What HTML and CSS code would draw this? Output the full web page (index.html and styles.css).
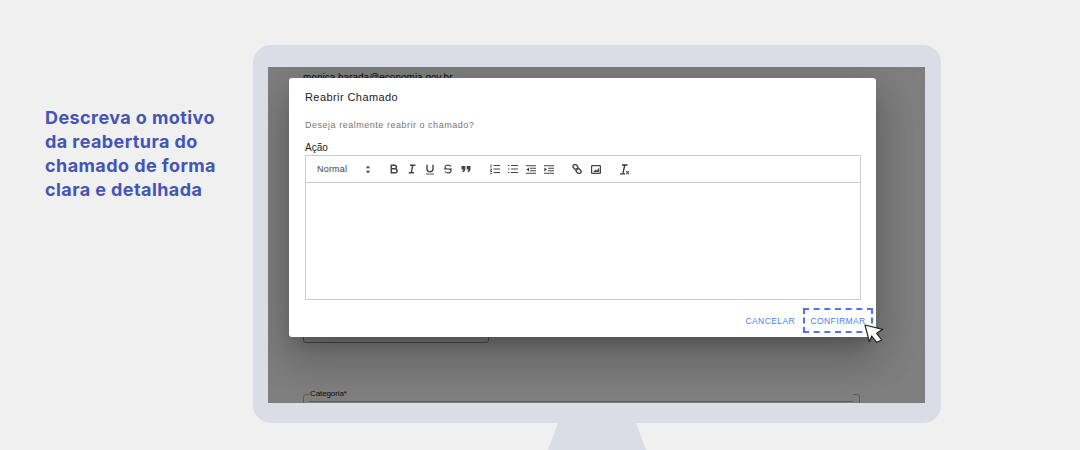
FILE: index.html
```html
<!DOCTYPE html>
<html lang="pt-BR">
<head>
<meta charset="utf-8">
<title>Reabrir Chamado</title>
<link rel="stylesheet" href="styles.css">
</head>
<body>
<main class="page">
  <h1 class="caption">Descreva o motivo<br>da reabertura do<br>chamado de forma<br>clara e detalhada</h1>
  <div class="computer">
    <div class="monitor">
      <div class="screen">
        <div class="bg-email">monica.harada@economia.gov.br</div>
        <div class="bg-box"></div>
        <div class="bg-field"><span class="bg-legend">Categoria*</span></div>
        <div class="scrim"></div>
        <section class="dialog">
          <h2 class="dialog-title">Reabrir Chamado</h2>
          <p class="dialog-text">Deseja realmente reabrir o chamado?</p>
          <label class="field-label">Ação</label>
          <div class="editor">
            <div class="toolbar">
              <span class="picker">Normal
                <svg class="tb-icon picker-arrows" width="6" height="9" viewBox="0 0 6 9"><path d="M3 0.5 5.2 3.2H.8ZM3 8.5.8 5.8H5.2Z" fill="#555"/></svg>
              </span>
              <div class="tb-group">
                <svg class="tb-icon" width="10" height="10" viewBox="0 0 10 10"><path d="M2.3 1.2H5.6C8 1.2 8 4.8 5.6 4.8H2.3ZM2.3 4.8H6.2C8.8 4.8 8.8 8.8 6.2 8.8H2.3Z" fill="none" stroke="#444" stroke-width="1.5"/></svg>
                <svg class="tb-icon" width="10" height="10" viewBox="0 0 10 10"><path d="M3 1.2H8.4M1.8 8.8H7M5.7 1.2 4.3 8.8" fill="none" stroke="#444" stroke-width="1.4"/></svg>
                <svg class="tb-icon" width="10" height="11" viewBox="0 0 10 11"><path d="M2 .8V5.2C2 8.4 8 8.4 8 5.2V.8" fill="none" stroke="#444" stroke-width="1.4"/><path d="M1 10H9" stroke="#5f7fae" stroke-width="1.3"/></svg>
                <svg class="tb-icon" width="10" height="10" viewBox="0 0 10 10"><path d="M8 2.6C7 .6 3 .6 2.2 2.6 1.6 4.2 3 5 5 5S8.6 6 7.9 7.4C7 9.400 3 9.400 2 7.400M.8 5H9.200" fill="none" stroke="#444" stroke-width="1.200"/></svg>
                <svg class="tb-icon" width="10" height="8" viewBox="0 0 10 8"><path d="M.5 1H4.300V4.200C4.300 6 3 7 1.500 7.300V5.700C2 5.500 2.400 5.200 2.400 4.600H.5ZM5.700 1H9.500V4.200C9.500 6 8.200 7 6.700 7.300V5.700C7.200 5.500 7.600 5.200 7.600 4.600H5.700Z" fill="#444"/></svg>
              </div>
              <div class="tb-group tb-lists">
                <svg class="tb-icon" width="10" height="10" viewBox="0 0 10 10"><path d="M3.500 1.500H10M3.500 5H10M3.500 8.500H10M1 .5V3.500M.3 5H1.800L.3 7.500H2M.3 9.500H1.800" fill="none" stroke="#444" stroke-width="1"/></svg>
                <svg class="tb-icon" width="10" height="10" viewBox="0 0 10 10"><path d="M3 1.500H10M3 5H10M3 8.500H10M0 1.500H1.500M0 5H1.500M0 8.500H1.500" fill="none" stroke="#444" stroke-width="1.100"/></svg>
                <svg class="tb-icon" width="10" height="9" viewBox="0 0 10 9"><path d="M0 .7H10M4 3.300H10M4 5.700H10M0 8.300H10" fill="none" stroke="#444" stroke-width="1.100"/><path d="M3 2.400V6.600L.3 4.500Z" fill="#444"/></svg>
                <svg class="tb-icon" width="10" height="9" viewBox="0 0 10 9"><path d="M0 .7H10M4 3.300H10M4 5.700H10M0 8.300H10" fill="none" stroke="#444" stroke-width="1.100"/><path d="M.3 2.400V6.600L3 4.500Z" fill="#444"/></svg>
              </div>
              <div class="tb-group tb-media">
                <svg class="tb-icon" width="10" height="10" viewBox="0 0 10 10"><rect x=".9" y=".9" width="5" height="4" rx="1.800" transform="rotate(45 3.400 2.900)" fill="none" stroke="#444" stroke-width="1.400"/><rect x="4.100" y="5.100" width="5" height="4" rx="1.800" transform="rotate(45 6.600 7.100)" fill="none" stroke="#444" stroke-width="1.400"/></svg>
                <svg class="tb-icon" width="10" height="9" viewBox="0 0 10 9"><rect x=".6" y=".6" width="8.800" height="7.800" rx=".6" fill="none" stroke="#444" stroke-width="1.200"/><path d="M2 7 4.500 4.500 6 5.800 7.300 3.200 8.200 3.200V7Z" fill="#444"/></svg>
                <svg class="tb-icon tb-clear" width="11" height="11" viewBox="0 0 11 11"><path d="M3 1H8.500M5.800 1 4 9M1 9.800H6" fill="none" stroke="#333" stroke-width="1.300"/><path d="M7.200 7.200 10 10M10 7.200 7.200 10" stroke="#555" stroke-width="1.100"/></svg>
              </div>
            </div>
            <div class="editor-body"></div>
          </div>
          <div class="actions">
            <button class="btn" type="button">CANCELAR</button>
            <button class="btn btn-focus" type="button">CONFIRMAR</button>
          </div>
        </section>
        <svg class="cursor" width="20" height="20" viewBox="0 0 20 20"><path d="M1 1 18.700 5.300 12.700 9.300 17.700 16 12.700 18.300 7.700 12 5.300 17.700Z" fill="#fff" stroke="#222" stroke-width="1.200" stroke-linejoin="round"/></svg>
      </div>
    </div>
    <div class="stand"></div>
  </div>
</main>
</body>
</html>
```
FILE: styles.css
```css
* { box-sizing: border-box; }
html, body { margin: 0; height: 450px; overflow: hidden; }
body { background: #f0f0f0; font-family: "Liberation Sans", Arial, sans-serif; }
.page { display: flex; align-items: flex-start; height: 450px; padding: 45px 0 0 45px; }
.caption {
  margin: 61px 0 0;
  width: 208px;
  color: #4355b5;
  font: 700 18px/24px Inter, "Open Sans", sans-serif;
  letter-spacing: .42px;
  flex: none;
}
.computer { display: flex; flex-direction: column; align-items: center; width: 688px; }
.monitor {
  width: 688px; height: 378px;
  padding: 22px 16px 20px 15px;
  background: #dadde5;
  border-radius: 18px;
}
.screen {
  position: relative;
  height: 336px;
  overflow: hidden;
  background: #fff;
}
.stand {
  width: 98px; height: 27px;
  background: #dadde5;
  clip-path: polygon(10px 0, 88px 0, 98px 100%, 0 100%);
}
.bg-email { padding: 5px 0 0 35px; font-size: 10px; line-height: 12px; color: #222; }
.bg-box {
  position: absolute; left: 35px; top: 250px;
  width: 186px; height: 26px;
  border: 1px solid #999; border-radius: 3px;
}
.bg-field {
  position: absolute; left: 35px; top: 327px;
  width: 557px; height: 30px;
  border: 1px solid #bbb; border-radius: 3px;
}
.bg-legend {
  position: absolute; left: 5px; right: 6px; top: -1px;
  height: 8px;
  padding: 0 1px;
  background: #fff;
  border-bottom: 1px solid #bbb;
  font-size: 8px; line-height: 0; letter-spacing: -.1px; color: #222;
}
.scrim { position: absolute; inset: 0; background: rgba(0,0,0,.5); }
.dialog {
  position: absolute; left: 21px; top: 11px;
  width: 587px; height: 259px;
  padding: 12px 15px 0 16px;
  background: #fff;
  border-radius: 3px;
  box-shadow: 0 11px 15px -7px rgba(0,0,0,.2), 0 24px 38px 3px rgba(0,0,0,.14), 0 9px 46px 8px rgba(0,0,0,.12);
}
.dialog-title { margin: 0; font-size: 11px; line-height: 14px; font-weight: 400; letter-spacing: .42px; color: #222; }
.dialog-text { margin: 15px 0 0; font-size: 9px; line-height: 12px; letter-spacing: .52px; color: #757575; }
.field-label { display: block; margin: 11px 0 1px; font-size: 10px; line-height: 12px; color: #222; }
.editor { border: 1px solid #ccc; height: 145px; display: flex; flex-direction: column; }
.toolbar {
  display: flex; align-items: center; flex: none;
  height: 27px; padding-left: 11px;
  border-bottom: 1px solid #ccc;
}
.picker {
  display: flex; align-items: center; justify-content: space-between;
  width: 54px;
  font-size: 9px; color: #444; letter-spacing: .2px;
}
.tb-group { display: flex; align-items: center; gap: 8px; margin-left: 18px; }
.tb-lists { margin-left: 19px; }
.tb-media { gap: 9px; }
.tb-clear { margin-left: 9px; }
.editor-body { flex: 1; }
.actions { display: flex; justify-content: flex-end; align-items: center; margin-top: 8px; gap: 8px; }
.btn {
  border: 0; background: none; padding: 0;
  height: 25px;
  font: 8.500px/12px "Liberation Sans", Arial, sans-serif;
  letter-spacing: .4px;
  color: #3f80f2;
}
.btn-focus { width: 70px; margin-right: -12px; border: 2px dashed #5770f0; }
.cursor { position: absolute; left: 596px; top: 257px; }
```
